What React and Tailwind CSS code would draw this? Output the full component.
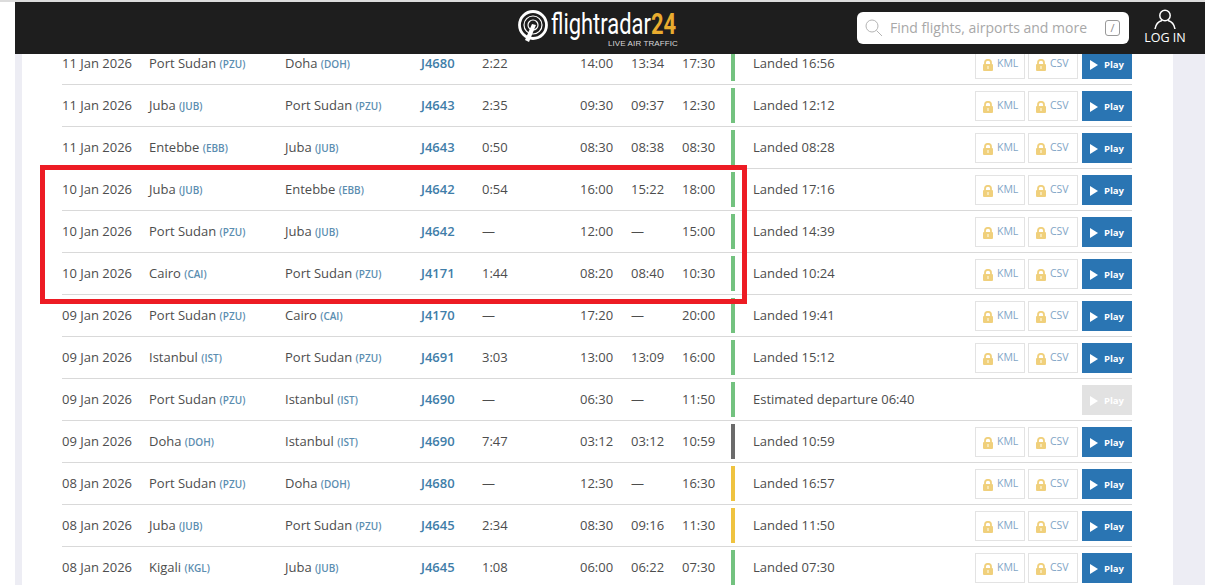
import React from "react";

const GREEN = "bg-[#73c27f]";
const YELLOW = "bg-[#efc340]";
const GRAY = "bg-[#6b6b6b]";

const flights = [
  ["11 Jan 2026", "Port Sudan", "PZU", "Doha", "DOH", "J4680", "2:22", "14:00", "13:34", "17:30", GREEN, "Landed 16:56"],
  ["11 Jan 2026", "Juba", "JUB", "Port Sudan", "PZU", "J4643", "2:35", "09:30", "09:37", "12:30", GREEN, "Landed 12:12"],
  ["11 Jan 2026", "Entebbe", "EBB", "Juba", "JUB", "J4643", "0:50", "08:30", "08:38", "08:30", GREEN, "Landed 08:28"],
  ["10 Jan 2026", "Juba", "JUB", "Entebbe", "EBB", "J4642", "0:54", "16:00", "15:22", "18:00", GREEN, "Landed 17:16"],
  ["10 Jan 2026", "Port Sudan", "PZU", "Juba", "JUB", "J4642", "—", "12:00", "—", "15:00", GREEN, "Landed 14:39"],
  ["10 Jan 2026", "Cairo", "CAI", "Port Sudan", "PZU", "J4171", "1:44", "08:20", "08:40", "10:30", GREEN, "Landed 10:24"],
  ["09 Jan 2026", "Port Sudan", "PZU", "Cairo", "CAI", "J4170", "—", "17:20", "—", "20:00", GREEN, "Landed 19:41"],
  ["09 Jan 2026", "Istanbul", "IST", "Port Sudan", "PZU", "J4691", "3:03", "13:00", "13:09", "16:00", GREEN, "Landed 15:12"],
  ["09 Jan 2026", "Port Sudan", "PZU", "Istanbul", "IST", "J4690", "—", "06:30", "—", "11:50", GREEN, "Estimated departure 06:40", true],
  ["09 Jan 2026", "Doha", "DOH", "Istanbul", "IST", "J4690", "7:47", "03:12", "03:12", "10:59", GRAY, "Landed 10:59"],
  ["08 Jan 2026", "Port Sudan", "PZU", "Doha", "DOH", "J4680", "—", "12:30", "—", "16:30", YELLOW, "Landed 16:57"],
  ["08 Jan 2026", "Juba", "JUB", "Port Sudan", "PZU", "J4645", "2:34", "08:30", "09:16", "11:30", YELLOW, "Landed 11:50"],
  ["08 Jan 2026", "Kigali", "KGL", "Juba", "JUB", "J4645", "1:08", "06:00", "06:22", "07:30", GREEN, "Landed 07:30"],
];

const LockIcon = () => (
  <svg width="10" height="12" viewBox="0 0 10 12" className="mt-[2px] shrink-0">
    <path d="M2 6V3.8a3 3 0 0 1 6 0V6" fill="none" stroke="#f0d07c" strokeWidth="1.8" />
    <rect x="0" y="5" width="10" height="7" rx="1" fill="#f0d07c" />
    <rect x="4.2" y="7" width="1.6" height="3" fill="#fbeec6" />
  </svg>
);

const LockedButton = ({ label }) => (
  <div className="flex h-[30px] items-center gap-[4px] border border-[#e3e3e3] pl-[7px]">
    <LockIcon />
    <span className="-mt-[1px] text-[10.5px] text-[#7fa5c6]">{label}</span>
  </div>
);

const PlayButton = ({ disabled }) => (
  <div
    className={`mt-[1px] flex h-[30px] w-[50px] items-center gap-[6px] pl-[8px] text-white ${
      disabled ? "bg-[#e2e2e2]" : "bg-[#2a75b3]"
    }`}
  >
    <svg width="8" height="10" viewBox="0 0 8 10" className="mt-[2px] shrink-0">
      <path d="M0 0L8 5L0 10Z" fill="#fff" />
    </svg>
    <span className="mt-[2px] text-[9.5px] font-bold">Play</span>
  </div>
);

const Airport = ({ name, code }) => (
  <div className="whitespace-nowrap">
    {name} <span className="text-[10px] font-semibold text-[#5b8db0]">({code})</span>
  </div>
);

const FlightRow = ({ flight }) => {
  const [date, from, fromCode, to, toCode, number, duration, std, atd, sta, bar, status, noFiles] = flight;
  return (
    <div className="grid h-[42px] grid-cols-[87px_136px_136px_61px_98px_51px_51px_49px_22px_222px_107px_50px] items-center border-b border-[#d9d9d9]">
      <div>{date}</div>
      <Airport name={from} code={fromCode} />
      <Airport name={to} code={toCode} />
      <div className="font-semibold text-[#3f7ea9]">{number}</div>
      <div>{duration}</div>
      <div>{std}</div>
      <div>{atd}</div>
      <div>{sta}</div>
      <div className={`h-[35px] w-[4px] ${bar}`} />
      <div className="whitespace-nowrap">{status}</div>
      {noFiles ? (
        <div />
      ) : (
        <div className="mt-[1px] grid grid-cols-[50px_50px] gap-[3px]">
          <LockedButton label="KML" />
          <LockedButton label="CSV" />
        </div>
      )}
      <PlayButton disabled={noFiles} />
    </div>
  );
};

const Logo = () => (
  <div className="relative flex h-[52px] w-[165px] items-start">
    <svg width="32" height="34" viewBox="0 0 32 34" className="mt-[7px] shrink-0">
      <circle cx="16" cy="16" r="13.5" fill="none" stroke="#fff" strokeWidth="2.8" />
      <circle cx="16" cy="16" r="9" fill="none" stroke="#fff" strokeWidth="1.2" />
      <circle cx="16" cy="16" r="5" fill="none" stroke="#fff" strokeWidth="1.2" />
      <path d="M15 15L19 16L12 33L8 31Z" fill="#fff" />
    </svg>
    <div className="mt-[5px] ml-[2px] origin-left scale-x-[0.73] font-['Roboto',sans-serif] text-[30px] leading-[34px] whitespace-nowrap text-white">
      flightradar<span className="font-bold text-[#e9ac2f]">24</span>
    </div>
    <div className="absolute top-[37px] left-[91px] bg-[#1e1e1e] font-['Liberation_Sans',sans-serif] text-[8px] leading-[10px] tracking-[0.1px] whitespace-nowrap text-[#d8d8d8]">
      LIVE AIR TRAFFIC
    </div>
  </div>
);

const Header = () => (
  <header className="absolute top-[2px] right-0 left-[15px] flex h-[52px] items-center bg-[#1e1e1e] pl-[502px]">
    <Logo />
    <div className="ml-[175px] flex h-[32px] w-[272px] shrink-0 items-center rounded-[6px] bg-white pl-[8px] text-[14px] text-[#a8a8a8]">
      <svg width="18" height="18" viewBox="0 0 18 18" className="shrink-0">
        <circle cx="7" cy="7" r="6" fill="none" stroke="#b4b4b4" strokeWidth="1" />
        <path d="M11.5 11.5L17 17" stroke="#b4b4b4" strokeWidth="1" />
      </svg>
      <span className="-mt-[2px] ml-[7px] whitespace-nowrap">Find flights, airports and more</span>
      <span className="ml-[18px] flex h-[16px] w-[15px] shrink-0 items-center justify-center rounded-[3px] border border-[#999] text-[11px] text-[#888]">
        /
      </span>
    </div>
    <div className="ml-[16px] flex w-[40px] -translate-y-[1px] flex-col items-center text-white">
      <svg width="22" height="21" viewBox="0 0 22 21" className="mt-[-1px]">
        <circle cx="11" cy="6.5" r="5.2" fill="none" stroke="#fff" strokeWidth="1.5" />
        <path d="M1 20C2 14 6 12 8 11.5M21 20C20 14 16 12 14 11.5" fill="none" stroke="#fff" strokeWidth="1.5" />
      </svg>
      <span className="text-[12.5px] leading-[15px] whitespace-nowrap">LOG IN</span>
    </div>
  </header>
);

export default function App() {
  return (
    <div className="relative h-[585px] overflow-hidden bg-white pl-[15px] font-['Open_Sans',sans-serif] text-[13px] text-[#4d4d4d]">
      <div className="absolute top-0 right-0 left-0 h-[2px] bg-[#dcdcdc]" />
      <div className="h-full bg-[#ededf4] pr-[32px] pl-[7px]">
        <main className="h-full bg-white pt-[43px] pr-[41px] pl-[40px]">
          {flights.map((flight, i) => (
            <FlightRow key={i} flight={flight} />
          ))}
        </main>
      </div>
      <Header />
      <div className="absolute top-[165px] left-[40px] h-[139px] w-[707px] border-[5px] border-[#ed1c24]" />
    </div>
  );
}
